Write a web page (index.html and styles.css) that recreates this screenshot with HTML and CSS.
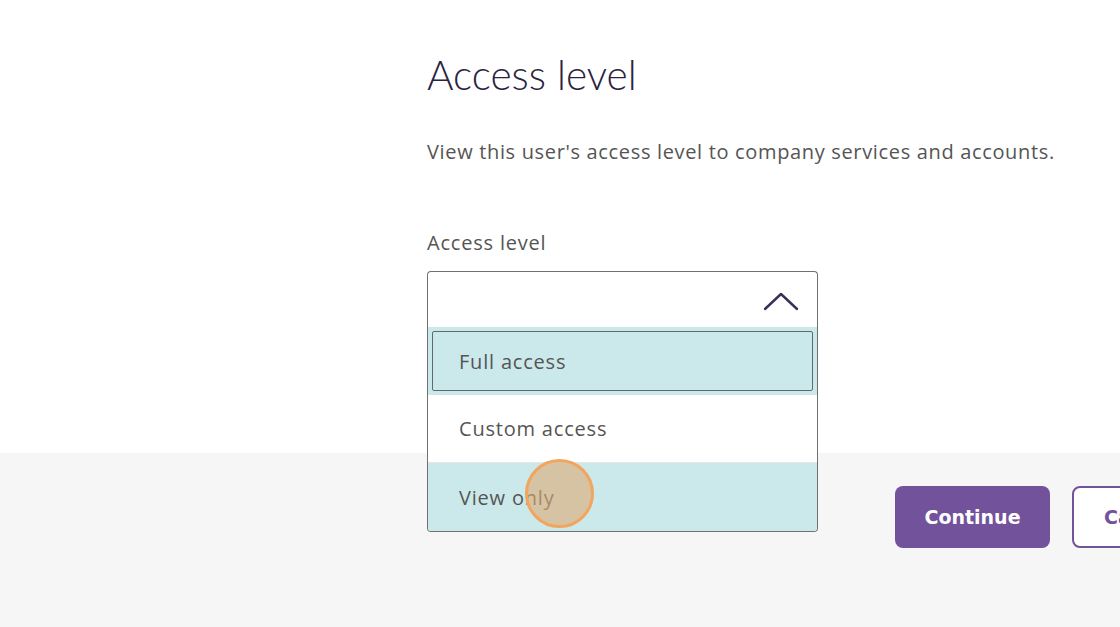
FILE: index.html
```html
<!DOCTYPE html>
<html lang="en">
<head>
  <meta charset="UTF-8">
  <meta name="viewport" content="width=device-width, initial-scale=1.0">
  <title>Access level</title>
  <link rel="stylesheet" href="styles.css">
</head>
<body>
  <div class="main">
    <h1>Access level</h1>
    <p class="intro">View this user's access level to company services and accounts.</p>

    <label class="field-label">Access level</label>
    <div class="select">
      <div class="select-box">
        <svg class="chevron" width="36" height="20" viewBox="0 0 36 20">
          <path d="M2 18 L18 3 L34 18" fill="none" stroke="#3b2e57" stroke-width="2.4" stroke-linecap="round" stroke-linejoin="round"/>
        </svg>
      </div>
      <ul class="options">
        <li class="option selected"><span>Full access</span></li>
        <li class="option">Custom access</li>
        <li class="option hover">View only</li>
      </ul>
    </div>
  </div>

  <div class="footer">
    <button class="btn primary">Continue</button>
    <button class="btn outline">Cancel</button>
  </div>

  <div class="click-dot"></div>
</body>
</html>
```

FILE: styles.css
```css
body {
  margin: 0;
  padding: 0;
  width: 1120px;
  height: 627px;
  overflow: hidden;
  background-color: #ffffff;
  font-family: "Open Sans", sans-serif;
  position: relative;
}

.main {
  height: 454px;
  box-sizing: border-box;
  padding-left: 427px;
  padding-top: 50px;
  border-bottom: 1px solid #e2e2e2;
}

.main h1 {
  margin: 0;
  font-family: "Lato", sans-serif;
  font-weight: 300;
  font-size: 40.5px;
  color: #2b2240;
  line-height: 50px;
}

.intro {
  margin: 0;
  margin-top: 39px;
  font-size: 20px;
  letter-spacing: 0.66px;
  color: #555555;
  line-height: 26px;
}

.field-label {
  display: block;
  margin-top: 65px;
  font-size: 20px;
  letter-spacing: 0.8px;
  color: #555555;
  line-height: 26px;
}

.select {
  position: relative;
  width: 391px;
  margin-top: 15px;
}

.select-box {
  height: 55px;
  border: 1px solid #707070;
  border-bottom-color: #9a9a9a;
  border-radius: 4px 4px 0 0;
  display: flex;
  align-items: center;
  justify-content: flex-end;
  padding-right: 18px;
  background: #ffffff;
}

.chevron {
  margin-top: 2px;
}

.options {
  position: absolute;
  top: 56px;
  left: 0;
  right: 0;
  margin: 0;
  padding: 0;
  list-style: none;
  border: 1px solid #707070;
  border-top: none;
  border-radius: 0 0 4px 4px;
  background: #ffffff;
  overflow: hidden;
  z-index: 2;
}

.option {
  height: 67px;
  display: flex;
  align-items: center;
  padding-left: 31px;
  font-size: 20px;
  letter-spacing: 0.8px;
  color: #555555;
  position: relative;
}

.option.selected {
  background: #cbe9ea;
  padding: 4px;
  height: 60px;
  display: block;
}

.option.selected span {
  display: flex;
  align-items: center;
  height: 58px;
  padding-left: 26px;
  border: 1px solid #5d6b6c;
  border-radius: 2px;
}

.option + .option.hover {
  border-top: 1px solid #e6e6e6;
}

.option.hover {
  background: #cbe9ea;
  height: 68px;
}

.footer {
  height: 174px;
  background: #f6f6f6;
  display: flex;
  align-items: flex-start;
  padding-left: 895px;
  gap: 22px;
  box-sizing: border-box;
  margin-top: -1px;
}

.btn {
  margin-top: 33px;
  height: 62px;
  border-radius: 8px;
  font-family: "DejaVu Sans", sans-serif;
  font-weight: bold;
  font-size: 19px;
  flex-shrink: 0;
}

.primary {
  width: 155px;
  background: #72529a;
  border: none;
  color: #ffffff;
}

.outline {
  width: 140px;
  background: #ffffff;
  border: 2px solid #72529a;
  color: #72529a;
  text-align: left;
  padding-left: 30px;
}

.click-dot {
  position: absolute;
  left: 525px;
  top: 459px;
  width: 69px;
  height: 69px;
  border-radius: 50%;
  border: 3px solid #f2a55e;
  background: rgba(222, 170, 115, 0.6);
  z-index: 3;
  box-sizing: border-box;
}
```
